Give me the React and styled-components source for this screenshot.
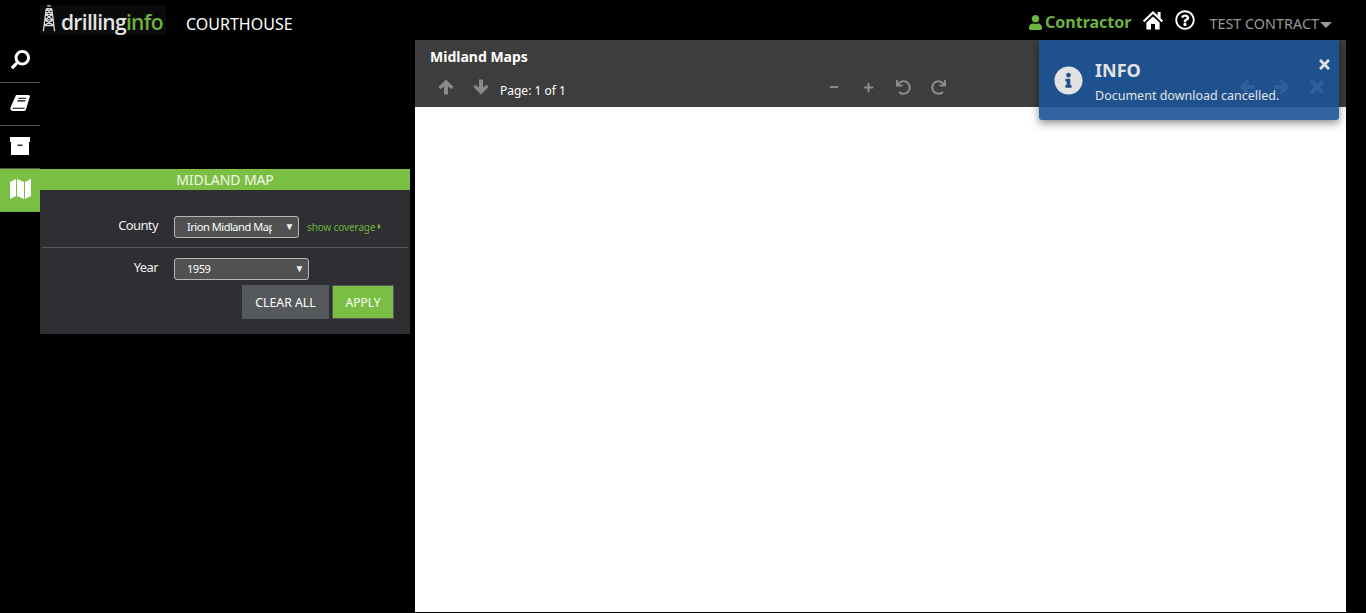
import React from "react";
import styled, { createGlobalStyle } from "styled-components";
import {
  FaSearch,
  FaUser,
  FaRegQuestionCircle,
  FaCaretRight,
  FaInfoCircle,
  FaTimes,
  FaMinus,
  FaPlus,
  FaUndo,
  FaRedo,
} from "react-icons/fa";

const GlobalStyle = createGlobalStyle`
  html, body {
    margin: 0;
    height: 100%;
    background: #000;
    overflow: hidden;
  }
  * {
    box-sizing: border-box;
  }
  body {
    font-family: "Noto Sans", "Open Sans", sans-serif;
    color: #fff;
  }
`;

const TowerLogo = () => (
  <svg width="14" height="27" viewBox="0 0 14 29" fill="none" stroke="#d8d8d8" strokeWidth="1.4">
    <path d="M5 1h4M4 4h6M4 4l-3 24M10 4l3 24M3.4 10h7.2M2.6 16h8.8M1.8 22h10.4M4 4l6.6 6M10 4l-6.6 6M3.4 10l8 6M10.6 10l-8 6M2.6 16l9.6 6M11.4 16l-9.6 6" />
  </svg>
);

const BookIcon = () => (
  <svg width="20" height="18" viewBox="0 0 20 18">
    <path
      fill="#fff"
      d="M6 1H18.5C19.6 1 20.2 2 19.8 3L16 15.2C15.6 16.4 14.8 17 13.5 17H3C1 17 0 15.5 .5 13.5Z"
    />
    <path fill="none" stroke="#000" strokeWidth="1.1" d="M8.2 4.2H16M7.4 6.9H15.2M2.6 14.2H14.6" />
  </svg>
);

const ArchiveIcon = () => (
  <svg width="20" height="18" viewBox="0 0 20 18" fill="#fff">
    <rect x="0" y="0" width="20" height="5" />
    <rect x="1" y="5" width="18" height="13" />
    <rect x="7.5" y="7.5" width="5" height="1.6" fill="#333" />
  </svg>
);

const MapIcon = () => (
  <svg width="21" height="21" viewBox="0 0 21 21" fill="#fff">
    <path d="M0 4L6 1V18L0 21Z" />
    <path d="M7 1L14 4V21L7 18Z" />
    <path d="M15 4L21 1V18L15 21Z" />
  </svg>
);

const HomeIcon = () => (
  <svg width="20" height="20" viewBox="0 0 20 20">
    <path fill="none" stroke="#fff" strokeWidth="2.2" d="M.6 11.4L10 2.4L19.4 11.4" />
    <rect x="14.6" y="2" width="3" height="6" fill="#fff" />
    <path fill="#fff" d="M3.4 12.6L10 6.4L16.6 12.6V19.6H12V14H8V19.6H3.4Z" />
  </svg>
);

const ArrowIcon = ({ angle }) => (
  <svg width="16" height="16" viewBox="0 0 16 16" fill="currentColor" style={{ transform: `rotate(${angle}deg)` }}>
    <path d="M8 .5L15.6 8.1L13.4 10.3C12.4 9.2 11.2 8.2 10 7.6V15.5H6V7.6C4.8 8.2 3.6 9.2 2.6 10.3L.4 8.1Z" />
  </svg>
);

export default function App() {
  return (
    <Page>
      <GlobalStyle />
      <Header>
        <Logo>
          <TowerLogo />
          <LogoText>
            drilling<LogoAccent>info</LogoAccent>
          </LogoText>
        </Logo>
        <AppName>COURTHOUSE</AppName>
        <HeaderRight>
          <Role>
            <FaUser size={15} />
            Contractor
          </Role>
          <HeaderIcon>
            <HomeIcon />
          </HeaderIcon>
          <HeaderIcon>
            <FaRegQuestionCircle size={20} />
          </HeaderIcon>
          <UserMenu>
            TEST CONTRACT
            <MenuCaret />
          </UserMenu>
        </HeaderRight>
      </Header>

      <Body>
        <Sidebar>
          <SideItem>
            <FaSearch size={19} style={{ transform: "scaleX(-1)" }} />
          </SideItem>
          <SideItem>
            <BookIcon />
          </SideItem>
          <SideItem>
            <ArchiveIcon />
          </SideItem>
          <SideItem $active>
            <MapIcon />
          </SideItem>
        </Sidebar>

        <FilterColumn>
          <FilterPanel>
            <PanelTitle>MIDLAND MAP</PanelTitle>
            <FieldRow $first>
              <FieldLabel>County</FieldLabel>
              <SelectBox $width={125}>
                <SelectValue>Irion Midland Map</SelectValue>
                <SelectArrow>▼</SelectArrow>
              </SelectBox>
              <CoverageLink>
                show coverage
                <FaCaretRight size={9} />
              </CoverageLink>
            </FieldRow>
            <Divider />
            <FieldRow>
              <FieldLabel>Year</FieldLabel>
              <SelectBox $width={135}>
                <SelectValue>1959</SelectValue>
                <SelectArrow>▼</SelectArrow>
              </SelectBox>
            </FieldRow>
            <Actions>
              <ClearButton>CLEAR ALL</ClearButton>
              <ApplyButton>APPLY</ApplyButton>
            </Actions>
          </FilterPanel>
        </FilterColumn>

        <Viewer>
          <ViewerBar>
            <ViewerTitle>Midland Maps</ViewerTitle>
            <ViewerTools>
              <ToolGroup>
                <ToolIcon>
                  <ArrowIcon angle={0} />
                </ToolIcon>
                <ToolIcon>
                  <ArrowIcon angle={180} />
                </ToolIcon>
                <PageLabel>Page: 1 of 1</PageLabel>
              </ToolGroup>
              <CenterTools>
                <ToolIcon>
                  <FaMinus size={10} />
                </ToolIcon>
                <ToolIcon>
                  <FaPlus size={11} />
                </ToolIcon>
                <ToolIcon>
                  <FaUndo size={15} />
                </ToolIcon>
                <ToolIcon>
                  <FaRedo size={15} />
                </ToolIcon>
              </CenterTools>
              <RightTools>
                <ToolIcon>
                  <ArrowIcon angle={-90} />
                </ToolIcon>
                <ToolIcon>
                  <ArrowIcon angle={90} />
                </ToolIcon>
                <ToolIcon>
                  <FaTimes size={20} />
                </ToolIcon>
              </RightTools>
            </ViewerTools>
          </ViewerBar>
          <ViewerPage />
        </Viewer>
      </Body>

      <Toast>
        <FaInfoCircle size={29} />
        <ToastText>
          <ToastTitle>INFO</ToastTitle>
          <ToastMessage>Document download cancelled.</ToastMessage>
        </ToastText>
        <ToastClose>
          <FaTimes size={15} />
        </ToastClose>
      </Toast>
    </Page>
  );
}

const Page = styled.div`
  position: relative;
  width: 1366px;
  height: 613px;
  display: flex;
  flex-direction: column;
  background: #000;
`;

const Header = styled.header`
  height: 40px;
  display: flex;
  align-items: flex-start;
  padding-left: 40px;
`;

const Logo = styled.div`
  width: 126px;
  height: 30px;
  margin-top: 5px;
  padding: 0 0 0 2px;
  display: flex;
  align-items: flex-start;
  gap: 5px;
  background: #0a0a0a;
`;

const LogoText = styled.span`
  margin-top: 4px;
  font-family: "Open Sans", sans-serif;
  font-size: 21px;
  line-height: 26px;
  font-weight: 600;
  letter-spacing: -0.7px;
  color: #e4e4e4;
`;

const LogoAccent = styled.span`
  color: #6cb33f;
`;

const AppName = styled.div`
  margin: 13px 0 0 20px;
  font-size: 16px;
  line-height: 22px;
  color: #fff;
`;

const HeaderRight = styled.div`
  margin-left: auto;
  padding-right: 34px;
  height: 40px;
  display: flex;
  align-items: flex-start;
`;

const Role = styled.div`
  margin: 11px 11px 0 0;
  display: flex;
  align-items: center;
  gap: 2px;
  font-size: 16px;
  line-height: 22px;
  font-weight: 700;
  color: #6cb33f;
`;

const HeaderIcon = styled.div`
  width: 21px;
  height: 21px;
  margin: 9px 11px 0 0;
  display: flex;
  align-items: center;
  justify-content: center;
  color: #fff;
`;

const UserMenu = styled.div`
  margin: 13px 0 0 3px;
  display: flex;
  align-items: center;
  font-size: 14.4px;
  line-height: 21px;
  color: #999;
`;

const MenuCaret = styled.span`
  margin: 2px 0 0 1px;
  width: 0;
  height: 0;
  border-left: 6.5px solid transparent;
  border-right: 6.5px solid transparent;
  border-top: 6px solid #999;
`;

const Body = styled.div`
  flex: 1;
  display: flex;
  min-height: 0;
`;

const Sidebar = styled.nav`
  width: 40px;
  display: flex;
  flex-direction: column;
`;

const SideItem = styled.div`
  height: 43px;
  padding-bottom: 3px;
  display: flex;
  align-items: center;
  justify-content: center;
  border-bottom: 1px solid ${(p) => (p.$active ? "#6cb33f" : "#555")};
  background: ${(p) => (p.$active ? "#7abf43" : "transparent")};
  color: #fff;
`;

const FilterColumn = styled.div`
  width: 375px;
  padding: 129px 5px 0 0;
`;

const FilterPanel = styled.section`
  height: 165px;
  background: #2e2e33;
`;

const PanelTitle = styled.h2`
  margin: 0;
  height: 21px;
  background: #7abf43;
  text-align: center;
  font-size: 14px;
  line-height: 21px;
  font-weight: 400;
  letter-spacing: -0.1px;
  color: #f2f7ea;
`;

const FieldRow = styled.div`
  display: flex;
  align-items: center;
  height: 23px;
  margin-top: ${(p) => (p.$first ? "25px" : "9px")};
`;

const FieldLabel = styled.label`
  width: 118px;
  margin-right: 16px;
  padding-bottom: 3px;
  text-align: right;
  font-size: 13px;
  letter-spacing: -0.6px;
  color: #f0f0f0;
`;

const SelectBox = styled.div`
  width: ${(p) => p.$width}px;
  height: 22px;
  padding: 0 4px 0 12px;
  display: flex;
  align-items: center;
  border: 1px solid #b5b5b5;
  border-radius: 3px;
  background: #515151;
  font-size: 11px;
  letter-spacing: -0.45px;
  color: #fff;
`;

const SelectValue = styled.span`
  flex: 1;
  min-width: 0;
  max-width: 85px;
  overflow: hidden;
  white-space: nowrap;
`;

const SelectArrow = styled.span`
  margin-left: auto;
  padding-bottom: 2px;
  font-size: 10px;
  color: #eee;
`;

const CoverageLink = styled.a`
  margin-left: 8px;
  display: flex;
  align-items: center;
  font-size: 10px;
  letter-spacing: -0.12px;
  color: #6cb33f;
`;

const Divider = styled.hr`
  margin: 9px 0 0 2px;
  width: 366px;
  height: 1px;
  border: 0;
  background: #55555a;
`;

const Actions = styled.div`
  margin-top: 5px;
  padding-right: 16px;
  display: flex;
  justify-content: flex-end;
  gap: 3px;
`;

const ClearButton = styled.button`
  width: 87px;
  height: 34px;
  padding: 0;
  border: 0;
  background: #55595c;
  font-family: inherit;
  font-size: 12.3px;
  color: #fff;
`;

const ApplyButton = styled.button`
  width: 62px;
  height: 34px;
  padding: 0;
  border: 1px solid #55595c;
  background: #7abf43;
  font-family: inherit;
  font-size: 12px;
  color: #fff;
`;

const Viewer = styled.main`
  width: 931px;
  display: flex;
  flex-direction: column;
  padding-bottom: 1px;
`;

const ViewerBar = styled.div`
  height: 67px;
  padding: 6px 0 0 15px;
  background: #3d3d3d;
`;

const ViewerTitle = styled.div`
  font-size: 14px;
  line-height: 21px;
  font-weight: 700;
  color: #fff;
`;

const ViewerTools = styled.div`
  margin-top: 4px;
  height: 32px;
  display: flex;
  align-items: center;
`;

const ToolGroup = styled.div`
  display: flex;
  align-items: center;
  width: 388px;
  margin-left: -2px;
`;

const ToolIcon = styled.span`
  width: 35px;
  display: flex;
  justify-content: center;
  color: #8a8a8a;
`;

const PageLabel = styled.span`
  margin-left: 2px;
  padding-top: 6px;
  font-size: 12px;
  color: #fff;
`;

const CenterTools = styled.div`
  display: flex;
  align-items: center;
`;

const RightTools = styled.div`
  margin-left: auto;
  padding-right: 12px;
  display: flex;
  align-items: center;

  ${ToolIcon} {
    color: #e0e0e0;
  }
`;

const ViewerPage = styled.div`
  flex: 1;
  background: #fff;
`;

const Toast = styled.div`
  position: absolute;
  top: 40px;
  left: 1039px;
  width: 300px;
  height: 80px;
  padding: 16px 0 0 15px;
  display: flex;
  align-items: flex-start;
  gap: 12px;
  border-radius: 0 0 3px 3px;
  background: #1d5498;
  opacity: 0.9;
  box-shadow: 0 3px 8px rgba(0, 0, 0, 0.5);
  color: #f4f4f4;

  > svg {
    margin-top: 10px;
  }
`;

const ToastText = styled.div`
  display: flex;
  flex-direction: column;
`;

const ToastTitle = styled.div`
  font-size: 18px;
  line-height: 28px;
  font-weight: 700;
`;

const ToastMessage = styled.div`
  margin-top: 3px;
  font-size: 12.5px;
  line-height: 18px;
`;

const ToastClose = styled.span`
  position: absolute;
  top: 17px;
  right: 7px;
  display: flex;
`;
